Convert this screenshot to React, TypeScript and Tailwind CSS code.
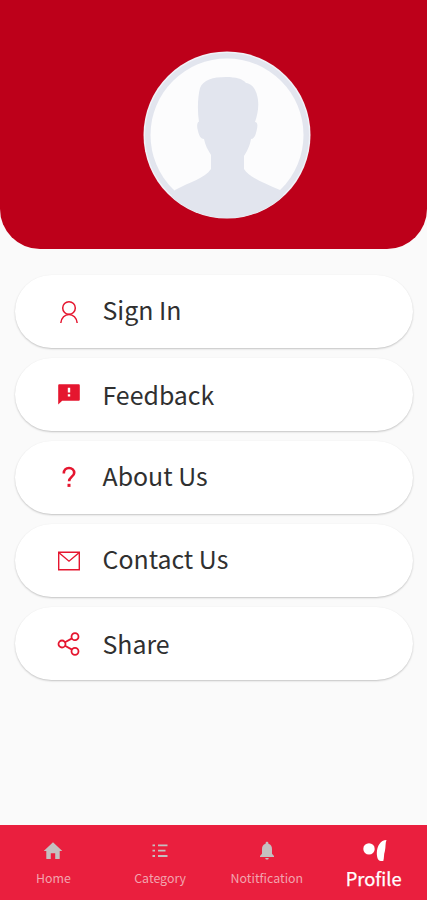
import React from 'react';

interface IconProps {
  className?: string;
}

const AvatarIcon = ({ className }: IconProps) => (
  <svg viewBox="0 0 168 168" className={className}>
    <defs>
      <clipPath id="avatar-clip">
        <circle cx="84" cy="84" r="83" />
      </clipPath>
    </defs>
    <circle cx="84" cy="84" r="83.5" fill="#f1f2f8" />
    <circle cx="84" cy="84" r="82" fill="#e2e5ee" />
    <circle cx="84" cy="84" r="76.5" fill="#fcfcfd" />
    <path
      clipPath="url(#avatar-clip)"
      fill="#e2e5ee"
      d="M56 71C54 58 55 45 57 37C60 29 70 26 83 26C93 26 100 28 103 32C110 33 114 40 115 49C116 58 114 65 112 71C115 71 115 75 113 82C112 86 110 88 108 88C107 95 103 102 101 105V118C105 125 118 131 137 139L153 168H15L32 139C47 131 62 127 68 118V104C65 99 62 94 61 88C58 88 56 85 55 80C53 74 55 70 56 71Z"
    />
  </svg>
);

const SignInIcon = ({ className }: IconProps) => (
  <svg viewBox="0 0 24 24" className={className} fill="none" stroke="currentColor" strokeWidth="1.5">
    <circle cx="12" cy="8" r="6.3" />
    <path d="M3.8 23C4.2 18 8 14.4 12 14.4S19.8 18 20.2 23" />
  </svg>
);

const FeedbackIcon = ({ className }: IconProps) => (
  <svg viewBox="0 0 24 24" className={className} fill="currentColor">
    <path d="M21.5 1.2H2.5C1.7 1.2 1.2 1.7 1.2 2.5V21.6L5.2 17.8H21.5C22.3 17.8 22.8 17.3 22.8 16.5V2.5C22.8 1.7 22.3 1.2 21.5 1.2ZM13.2 13.5H10.8V11.3H13.2ZM13.2 9.4H10.8V4.7H13.2Z" />
  </svg>
);

const QuestionIcon = ({ className }: IconProps) => (
  <svg viewBox="0 0 24 24" className={className} fill="none" stroke="currentColor" strokeWidth="2.6">
    <path d="M6.8 7.4C6.8 4 9 2 12 2S17.2 4.2 17.2 6.9C17.2 10.4 12.1 11 12.1 15.2" />
    <path d="M12 17.8V20.9" strokeWidth="3" />
  </svg>
);

const MailIcon = ({ className }: IconProps) => (
  <svg viewBox="0 0 24 24" className={className} fill="none" stroke="currentColor" strokeWidth="1.4">
    <path d="M1.7 3.2H22.3V20.8H1.7Z" />
    <path d="M2 3.7L12 12.2L22 3.7" />
  </svg>
);

const ShareIcon = ({ className }: IconProps) => (
  <svg viewBox="0 0 24 24" className={className} fill="none" stroke="currentColor" strokeWidth="1.8">
    <circle cx="5" cy="12" r="3.5" />
    <circle cx="18" cy="4.7" r="3.5" />
    <circle cx="18" cy="19.3" r="3.5" />
    <path d="M8 10.3L15 6.4M8 13.7L15 17.6" />
  </svg>
);

const HomeIcon = ({ className }: IconProps) => (
  <svg viewBox="0 0 20 20" className={className} fill="currentColor">
    <path d="M10 1.3L19.3 10H16.7V17.5Q16.7 18 16.2 18H12.2V12.2H7.8V18H3.8Q3.3 18 3.3 17.5V10H.7Z" />
  </svg>
);

const CategoryIcon = ({ className }: IconProps) => (
  <svg viewBox="0 0 20 20" className={className} stroke="currentColor" strokeWidth="1.8">
    <path d="M2.5 4.4H5M8 4.4H17.5M2.5 9.7H5M8 9.7H15.5M2.5 15H5M8 15H17.5" />
  </svg>
);

const BellIcon = ({ className }: IconProps) => (
  <svg viewBox="0 0 20 20" className={className} fill="currentColor">
    <path d="M10 .8C10.8 .8 11.4 1.4 11.4 2.2V2.8C14 3.5 15 5.7 15 8.2V12.8L17 15V16H3V15L5 12.8V8.2C5 5.7 6 3.5 8.6 2.8V2.2C8.6 1.4 9.2 .8 10 .8ZM8.3 17H11.7C11.7 18 11 18.6 10 18.6S8.3 18 8.3 17Z" />
  </svg>
);

const ProfileIcon = ({ className }: IconProps) => (
  <svg viewBox="0 0 28 24" className={className} fill="currentColor">
    <circle cx="9" cy="10.9" r="5.7" />
    <path d="M26.5 2C20.5 2 17 8 16.8 15C16.8 20 18.3 23 20.8 23H23.3C24.3 20 23.6 17 24.9 13C25.9 9 25.1 5 26.5 2Z" />
  </svg>
);

const menuItems = [
  { label: 'Sign In', icon: SignInIcon, labelClass: '-translate-y-0.5' },
  { label: 'Feedback', icon: FeedbackIcon, labelClass: 'translate-y-0' },
  { label: 'About Us', icon: QuestionIcon, labelClass: '-translate-y-0.5' },
  { label: 'Contact Us', icon: MailIcon, labelClass: '-translate-y-0.5' },
  { label: 'Share', icon: ShareIcon, labelClass: 'translate-y-0' },
];

const tabs = [
  { label: 'Home', icon: HomeIcon },
  { label: 'Category', icon: CategoryIcon },
  { label: 'Notitfication', icon: BellIcon },
];

const App = () => {
  return (
    <div className="flex h-[900px] w-full flex-col bg-[#fafafa] font-['Noto_Sans_CJK_SC','Noto_Sans',sans-serif]">
      <header className="flex h-[248.5px] justify-center rounded-b-[40px] bg-[#bd001a] pt-[51px] pl-[26px]">
        <AvatarIcon className="h-[168px] w-[168px]" />
      </header>

      <main className="flex flex-1 flex-col gap-[10px] pt-[26.5px] pr-[14px] pl-[15px]">
        {menuItems.map(({ label, icon: Icon, labelClass }) => (
          <button
            key={label}
            className="flex h-[73px] items-center rounded-full bg-white pl-[42px] text-left shadow-[0_1px_2px_rgba(0,0,0,0.22)]"
          >
            <Icon className="h-6 w-6 text-[#e5162f]" />
            <span className={`ml-[21.5px] text-[24.9px] leading-none text-[#303030] ${labelClass}`}>{label}</span>
          </button>
        ))}
      </main>

      <nav className="grid h-[75px] grid-cols-4 bg-[#ea1f3e]">
        {tabs.map(({ label, icon: Icon }) => (
          <button key={label} className="flex flex-col items-center pt-4 text-[#c5bfc0]">
            <Icon className="h-5 w-5" />
            <span className="mt-[10px] text-[12.4px] leading-[14px] text-[#f2a4ae]">{label}</span>
          </button>
        ))}
        <button className="flex flex-col items-center pt-[13px] text-white">
          <ProfileIcon className="h-6 w-7" />
          <span className="mt-[6px] text-[18.3px] leading-5 [-webkit-text-stroke:0.25px_white]">Profile</span>
        </button>
      </nav>
    </div>
  );
};

export default App;
